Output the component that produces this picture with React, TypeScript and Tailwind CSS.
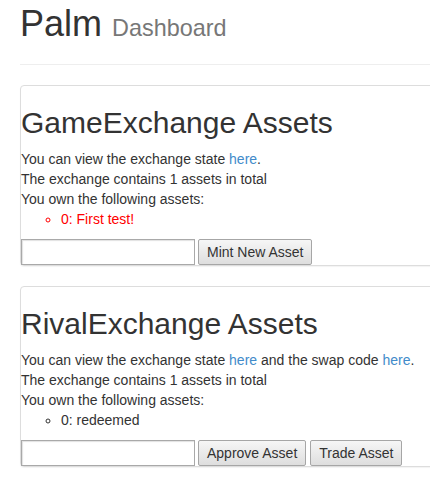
import React from "react";

type Props = {
  title: string;
  swap?: boolean;
  asset: string;
  mine?: boolean;
  buttons: string[];
};

const Btn: React.FC<{ label: string }> = ({ label }) => (
  <button className="h-[26px] px-[8px] border border-[#a6a6a6] rounded-[2px] bg-gradient-to-b from-[#f6f6f6] to-[#dedede] text-[14px] text-[#333] leading-none">
    {label}
  </button>
);

const AssetPanel: React.FC<Props> = ({ title, swap, asset, mine, buttons }) => {
  return (
    <div className="w-[480px] border border-[#ddd] rounded-[4px] shadow-[0_1px_1px_rgba(0,0,0,0.05)] mb-5">
      <h2 className="mt-5 mb-[10px] text-[30px] leading-[33px] font-normal text-[#333]">{title}</h2>
      <div>
        You can view the exchange state <a className="text-[#428bca]">here</a>
        {swap ? (
          <>
            {" "}and the swap code <a className="text-[#428bca]">here</a>.
          </>
        ) : (
          "."
        )}
      </div>
      <div>The exchange contains 1 assets in total</div>
      <div>You own the following assets:</div>
      <ul className="list-[circle] pl-10 mb-[10px]">
        <li className={mine ? "text-[#ff0000]" : ""}>{asset}</li>
      </ul>
      <div className="flex gap-[4px]">
        <input className="w-[174px] h-[26px] border border-[#a9a9a9] shadow-[inset_1px_1px_1px_rgba(0,0,0,0.12)] bg-white mr-[-1px]" />
        {buttons.map((b) => (
          <Btn key={b} label={b} />
        ))}
      </div>
    </div>
  );
};

export default function App() {
  return (
    <div className="w-[430px] h-[493px] overflow-hidden bg-white pl-5 font-['Liberation_Sans',Arial,sans-serif] text-[14px] leading-[20px] text-[#333]">
      <div className="w-[480px] border-b border-[#eee] pb-[9px] mb-5">
        <h1 className="mt-[4px] mb-[7px] text-[36px] leading-[40px] font-normal">
          Palm <small className="text-[23.4px] text-[#777]">Dashboard</small>
        </h1>
      </div>
      <AssetPanel
        title="GameExchange Assets"
        asset="0: First test!"
        mine
        buttons={["Mint New Asset"]}
      />
      <AssetPanel
        title="RivalExchange Assets"
        swap
        asset="0: redeemed"
        buttons={["Approve Asset", "Trade Asset"]}
      />
    </div>
  );
}
